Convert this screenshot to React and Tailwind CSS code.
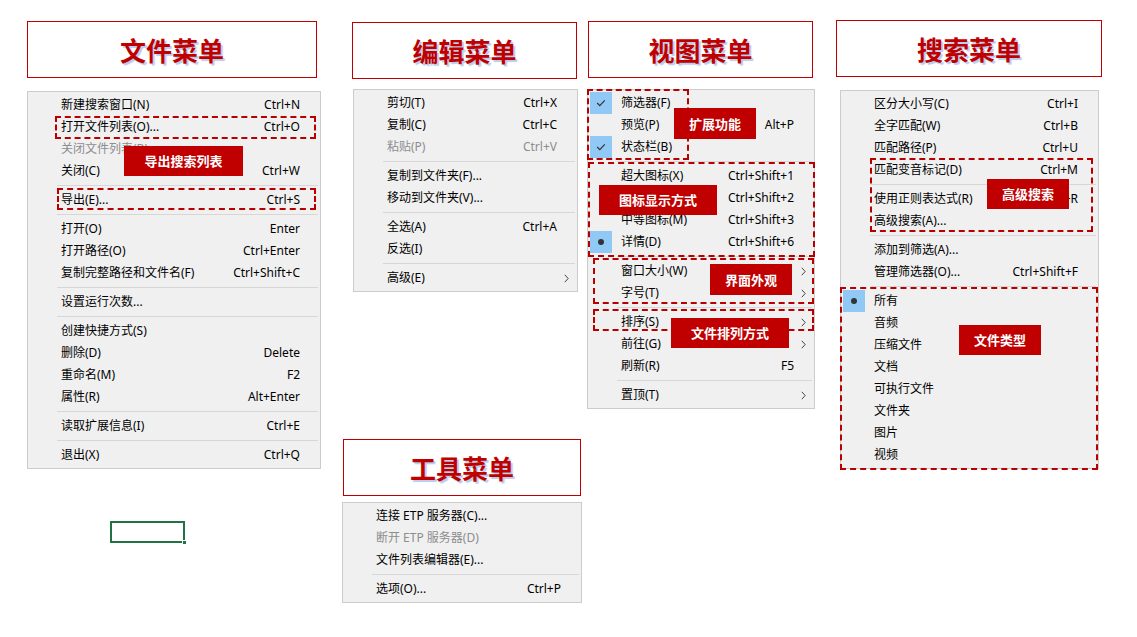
const font = { fontFamily: '"Noto Sans", "Noto Sans CJK SC", sans-serif' };

const fileItems = [
    { label: '新建搜索窗口(N)', key: 'Ctrl+N' },
    { label: '打开文件列表(O)...', key: 'Ctrl+O' },
    { label: '关闭文件列表(B)', disabled: true },
    { label: '关闭(C)', key: 'Ctrl+W' },
    'sep',
    { label: '导出(E)...', key: 'Ctrl+S' },
    'sep',
    { label: '打开(O)', key: 'Enter' },
    { label: '打开路径(O)', key: 'Ctrl+Enter' },
    { label: '复制完整路径和文件名(F)', key: 'Ctrl+Shift+C' },
    'sep',
    { label: '设置运行次数...' },
    'sep',
    { label: '创建快捷方式(S)' },
    { label: '删除(D)', key: 'Delete' },
    { label: '重命名(M)', key: 'F2' },
    { label: '属性(R)', key: 'Alt+Enter' },
    'sep',
    { label: '读取扩展信息(I)', key: 'Ctrl+E' },
    'sep',
    { label: '退出(X)', key: 'Ctrl+Q' },
];

const editItems = [
    { label: '剪切(T)', key: 'Ctrl+X' },
    { label: '复制(C)', key: 'Ctrl+C' },
    { label: '粘贴(P)', key: 'Ctrl+V', disabled: true },
    'sep',
    { label: '复制到文件夹(F)...' },
    { label: '移动到文件夹(V)...' },
    'sep',
    { label: '全选(A)', key: 'Ctrl+A' },
    { label: '反选(I)' },
    'sep',
    { label: '高级(E)', arrow: true },
];

const viewItems = [
    { label: '筛选器(F)', mark: 'check' },
    { label: '预览(P)', key: 'Alt+P' },
    { label: '状态栏(B)', mark: 'check' },
    'sep',
    { label: '超大图标(X)', key: 'Ctrl+Shift+1' },
    { label: '大图标(L)', key: 'Ctrl+Shift+2' },
    { label: '中等图标(M)', key: 'Ctrl+Shift+3' },
    { label: '详情(D)', key: 'Ctrl+Shift+6', mark: 'dot' },
    'sep',
    { label: '窗口大小(W)', arrow: true },
    { label: '字号(T)', arrow: true },
    'sep',
    { label: '排序(S)', arrow: true },
    { label: '前往(G)', arrow: true },
    { label: '刷新(R)', key: 'F5' },
    'sep',
    { label: '置顶(T)', arrow: true },
];

const searchItems = [
    { label: '区分大小写(C)', key: 'Ctrl+I' },
    { label: '全字匹配(W)', key: 'Ctrl+B' },
    { label: '匹配路径(P)', key: 'Ctrl+U' },
    { label: '匹配变音标记(D)', key: 'Ctrl+M' },
    'sep',
    { label: '使用正则表达式(R)', key: 'Ctrl+R' },
    { label: '高级搜索(A)...' },
    'sep',
    { label: '添加到筛选(A)...' },
    { label: '管理筛选器(O)...', key: 'Ctrl+Shift+F' },
    'sep',
    { label: '所有', mark: 'dot' },
    { label: '音频' },
    { label: '压缩文件' },
    { label: '文档' },
    { label: '可执行文件' },
    { label: '文件夹' },
    { label: '图片' },
    { label: '视频' },
];

const toolItems = [
    { label: '连接 ETP 服务器(C)...' },
    { label: '断开 ETP 服务器(D)', disabled: true },
    { label: '文件列表编辑器(E)...' },
    'sep',
    { label: '选项(O)...', key: 'Ctrl+P' },
];

const Mark = ({ type }) => (
    <div className="w-[22px] h-[22px] shrink-0 flex items-center justify-center bg-[#90c8f6]">
        {type === 'check' ? (
            <svg width="10" height="8" viewBox="0 0 10 8">
                <polyline points="1.2,4 3.8,6.6 8.8,1.4" fill="none" stroke="#333" strokeWidth="1.2" />
            </svg>
        ) : (
            <div className="w-[6px] h-[6px] rounded-full bg-[#333]"></div>
        )}
    </div>
);

const Menu = ({ items, className }) => (
    <div className={`absolute border border-[#cccccc] bg-[#f0f0f0] p-[2px] text-[12px] leading-none text-black ${className}`} style={font}>
        {items.map((item, i) =>
            item === 'sep' ? (
                <div key={i} className="h-[7px] flex items-center">
                    <div className="ml-[27px] h-px flex-1 bg-[#d7d7d7]"></div>
                </div>
            ) : (
                <div key={i} className={`h-[22px] flex items-center ${item.disabled ? 'text-[#8d8d8d]' : ''}`}>
                    {item.mark ? <Mark type={item.mark} /> : <div className="w-[22px] shrink-0"></div>}
                    <div className="pl-[9px] flex-1 whitespace-nowrap">{item.label}</div>
                    {item.key && <div className="whitespace-nowrap">{item.key}</div>}
                    <div className="w-[18px] shrink-0 flex justify-center">
                        {item.arrow && (
                            <svg width="5" height="9" viewBox="0 0 5 9">
                                <polyline points="0.8,0.8 4.2,4.5 0.8,8.2" fill="none" stroke="#444" strokeWidth="1" />
                            </svg>
                        )}
                    </div>
                </div>
            )
        )}
    </div>
);

const Title = ({ text, className }) => (
    <div
        className={`absolute border border-[#c00000] bg-white flex items-center justify-center text-[26px] font-bold text-[#c00000] [text-shadow:2px_2px_1px_#b7cdec] ${className}`}
        style={{ fontFamily: '"Noto Sans CJK SC", sans-serif' }}
    >
        {text}
    </div>
);

const Tag = ({ text, className }) => (
    <div
        className={`absolute bg-[#c00000] text-white text-[13px] font-bold flex items-center justify-center ${className}`}
        style={{ fontFamily: '"Noto Sans CJK SC", sans-serif' }}
    >
        {text}
    </div>
);

const Dash = ({ className }) => (
    <div className={`absolute border-2 border-dashed border-[#b80000] ${className}`}></div>
);

const App = () => {
    return (
        <div className="relative w-[1137px] h-[637px] bg-white overflow-hidden">
            {/* titles */}
            <Title text="文件菜单" className="left-[27px] top-[21px] w-[290px] h-[57px]" />
            <Title text="编辑菜单" className="left-[352px] top-[22px] w-[225px] h-[57px]" />
            <Title text="视图菜单" className="left-[588px] top-[21px] w-[225px] h-[57px]" />
            <Title text="搜索菜单" className="left-[836px] top-[20px] w-[266px] h-[57px]" />
            <Title text="工具菜单" className="left-[343px] top-[439px] w-[238px] h-[57px]" />

            {/* menus */}
            <Menu items={fileItems} className="left-[27px] top-[91px] w-[294px]" />
            <Menu items={editItems} className="left-[353px] top-[89px] w-[225px]" />
            <Menu items={viewItems} className="left-[587px] top-[89px] w-[228px]" />
            <Menu items={searchItems} className="left-[840px] top-[90px] w-[259px]" />
            <Menu items={toolItems} className="left-[342px] top-[502px] w-[240px]" />

            {/* dashed groups */}
            <Dash className="left-[55px] top-[116px] w-[261px] h-[23px]" />
            <Dash className="left-[57px] top-[188px] w-[259px] h-[22px]" />
            <Dash className="left-[587px] top-[89px] w-[102px] h-[71px]" />
            <Dash className="left-[588px] top-[162px] w-[227px] h-[95px]" />
            <Dash className="left-[593px] top-[258px] w-[221px] h-[46px]" />
            <Dash className="left-[593px] top-[309px] w-[221px] h-[22px]" />
            <Dash className="left-[870px] top-[158px] w-[223px] h-[74px]" />
            <Dash className="left-[840px] top-[287px] w-[258px] h-[183px]" />

            {/* callout tags */}
            <Tag text="导出搜索列表" className="left-[124px] top-[146px] w-[119px] h-[30px]" />
            <Tag text="扩展功能" className="left-[674px] top-[108px] w-[82px] h-[31px]" />
            <Tag text="图标显示方式" className="left-[599px] top-[185px] w-[118px] h-[30px]" />
            <Tag text="界面外观" className="left-[710px] top-[264px] w-[82px] h-[31px]" />
            <Tag text="文件排列方式" className="left-[671px] top-[318px] w-[118px] h-[30px]" />
            <Tag text="高级搜索" className="left-[987px] top-[179px] w-[82px] h-[30px]" />
            <Tag text="文件类型" className="left-[959px] top-[325px] w-[82px] h-[30px]" />

            {/* selected sheet cell */}
            <div className="absolute left-[110px] top-[521px] w-[75px] h-[22px] border-2 border-[#217346]">
                <div className="absolute -right-[4px] -bottom-[4px] w-[5px] h-[5px] bg-[#217346] border border-white"></div>
            </div>
        </div>
    );
};

export default App;
